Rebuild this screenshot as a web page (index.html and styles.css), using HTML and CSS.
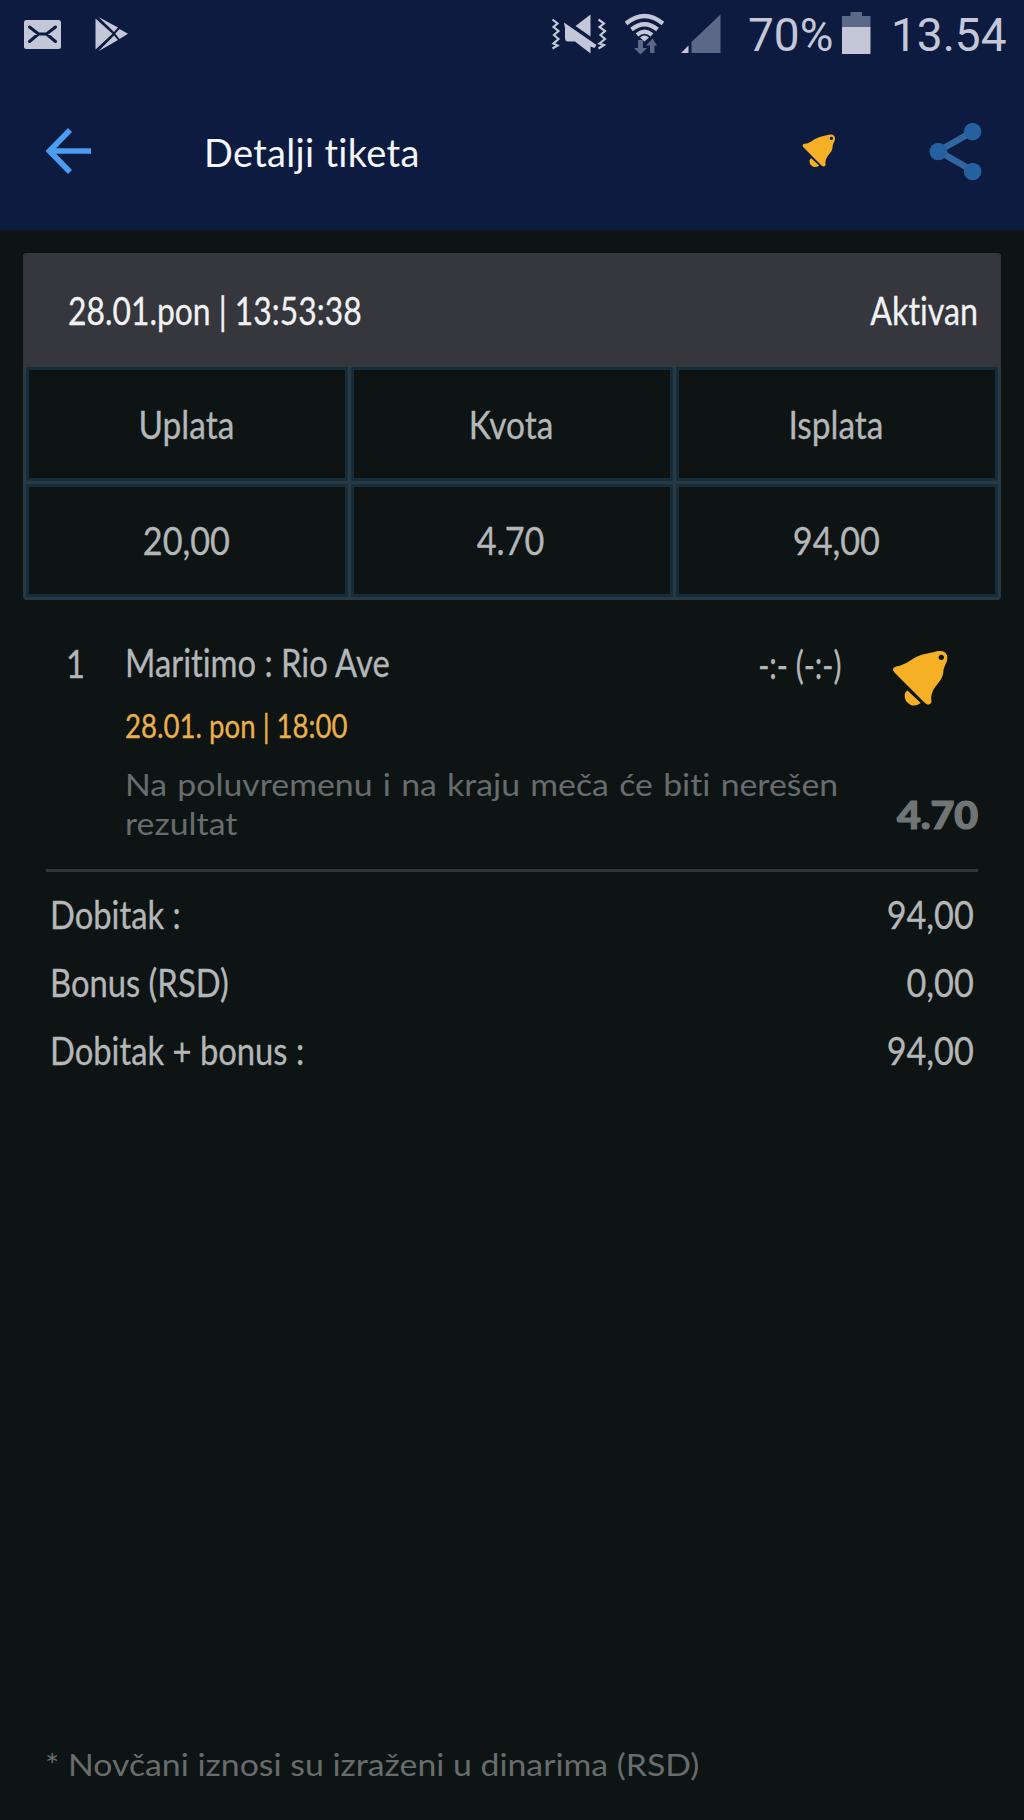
FILE: index.html
```html
<!DOCTYPE html>
<html lang="sr-Latn">
<head>
    <meta charset="UTF-8">
    <title>Detalji tiketa</title>
    <link rel="stylesheet" href="styles.css">
</head>
<body>
    <!-- Bell shared by the app bar and the match row -->
    <svg class="symbols" width="0" height="0">
        <symbol id="bell" viewBox="0 0 170 170">
            <path fill-rule="evenodd" d="M12 49C46 46 60 19 98 12C120 9 128 3 146 3A19 19 0 0 1 165 23C165 40 154 46 153 66C150 98 117 108 117 146Q121 162 107 163Q101 161 96 156L8 68Q-4 54 12 49ZM147 14a8 8 0 1 0 .1 0Z"/>
            <path d="M46 121L86 158Q70 169 56 164Q36 154 38 133Q39 124 46 121Z"/>
        </symbol>
    </svg>

    <div class="top">
        <div class="status-bar">
            <svg class="st-mail" width="38" height="60" viewBox="24 0 38 60">
                <rect x="24" y="20" width="37" height="29" rx="2.5" fill="#c3c7d8"/>
                <path d="M29.500 27L38.500 34H46.500L55.500 27M29.500 41.500L38.500 34M55.500 41.500L46.500 34" fill="none" stroke="#0c1b3f" stroke-width="3" stroke-linecap="round"/>
            </svg>
            <svg class="st-play" width="35" height="60" viewBox="95 0 35 60">
                <path d="M95.500 18.500L112.500 33.800L95.500 49.500ZM98.500 17L118 27.500L114 32ZM98.500 51.200L118 40L114 35.500ZM119.500 29L128 33.800L119.500 39L115.200 33.800Z" fill="#c3c7d8"/>
            </svg>
            <svg class="st-mute" width="58" height="60" viewBox="550 0 58 60">
                <path d="M575.500 26L590.500 14.500V36.500Z" fill="#c3c7d8"/>
                <path d="M564 22.500L596.500 45L594.500 48L590.500 46.500V53.500L575 41.500H568Q565 41.500 565 38V28Z" fill="#c3c7d8"/>
                <path d="M552.500 19.500L557.500 23.500L553.500 27L558.500 31L554 35L558.500 39L553.500 43.500L557.500 45.500L552.500 48.500M598.500 19.500L604 23.500L599.500 27L605 31L600.500 35L605 39L599.500 43.500L604 45L598.500 48.500" fill="none" stroke="#c3c7d8" stroke-width="2.200"/>
            </svg>
            <svg class="st-wifi" width="40" height="60" viewBox="625 0 40 60">
                <path d="M626 23.500Q644.500 8.500 663 23.500M631.500 29.500Q644.500 19 657.500 29.500M637 34.800Q644.500 28.500 652 34.800" fill="none" stroke="#c3c7d8" stroke-width="4.200"/>
                <path d="M640 37.500Q644.500 33.500 649 37.500L644.500 41.500Z" fill="#c3c7d8"/>
                <path d="M638 40H643V48H647L640.500 54.500L634 48H638ZM650 53V45.500H646L652.500 38.500L657 45.500H654.500V53Z" fill="#5c6986"/>
            </svg>
            <svg class="st-signal" width="40" height="60" viewBox="681 0 40 60">
                <path d="M720.500 14.500V53H691.500V42Z" fill="#5c6986"/>
                <path d="M688.500 45.500V53H681Z" fill="#c3c7d8"/>
            </svg>
            <span class="st-text st-percent">70%</span>
            <svg class="st-battery" width="29" height="60" viewBox="842 0 29 60">
                <path d="M842 27V16H850.500V12H862V16H870.500V27Z" fill="#5c6986"/>
                <path d="M842 27H870.500V54H842Z" fill="#c3c7d8"/>
            </svg>
            <span class="st-text st-time">13.54</span>
        </div>

        <div class="app-bar">
            <svg class="back" width="46" height="46" viewBox="0 0 46 46">
                <path d="M45 23H4M24 2L3.500 23L24 44" fill="none" stroke="#4a9df0" stroke-width="5.600"/>
            </svg>
            <h1>Detalji tiketa</h1>
            <svg class="bell-small"><use href="#bell"/></svg>
            <svg class="share" width="54" height="60" viewBox="0 0 54 60">
                <path d="M44 10.500L9.500 30L44 50" fill="none" stroke="#3465a3" stroke-width="6.500"/>
                <g fill="#2560a1">
                    <circle cx="9.300" cy="30.500" r="8.800"/>
                    <circle cx="43.600" cy="10.600" r="8.800"/>
                    <circle cx="43.600" cy="50.500" r="8.800"/>
                </g>
            </svg>
        </div>
    </div>

    <div class="ticket">
        <div class="ticket-head">
            <span class="narrow ticket-time">28.01.pon | 13:53:38</span>
            <span class="narrow right">Aktivan</span>
        </div>
        <div class="ticket-grid">
            <div><span class="narrow center">Uplata</span></div>
            <div><span class="narrow center">Kvota</span></div>
            <div><span class="narrow center">Isplata</span></div>
            <div><span class="narrow center num">20,00</span></div>
            <div><span class="narrow center num">4.70</span></div>
            <div><span class="narrow center num">94,00</span></div>
        </div>
    </div>

    <div class="match">
        <div class="match-no"><span class="narrow">1</span></div>
        <div class="match-info">
            <div class="match-teams">
                <span class="narrow">Maritimo : Rio Ave</span>
                <span class="narrow right score">-:- (-:-)</span>
            </div>
            <div class="match-date"><span class="narrow">28.01. pon | 18:00</span></div>
            <div class="match-tip">Na poluvremenu i na kraju meča će biti nerešen<br>rezultat</div>
        </div>
        <div class="match-side">
            <svg class="bell-big"><use href="#bell"/></svg>
            <span class="odds">4.70</span>
        </div>
    </div>

    <div class="totals">
        <div class="row"><span class="narrow">Dobitak :</span><span class="narrow right num">94,00</span></div>
        <div class="row"><span class="narrow">Bonus (RSD)</span><span class="narrow right num">0,00</span></div>
        <div class="row"><span class="narrow">Dobitak + bonus :</span><span class="narrow right num">94,00</span></div>
    </div>

    <div class="note"><span>* Novčani iznosi su izraženi u dinarima (RSD)</span></div>
</body>
</html>
```
FILE: styles.css
```css
* {
    box-sizing: border-box;
}
body {
    margin: 0;
    height: 1820px;
    display: flex;
    flex-direction: column;
    background: #0e1414;
    color: #b4b7b8;
    font-family: 'Lato', 'Open Sans', sans-serif;
    font-size: 38px;
    font-variant-ligatures: none;
    white-space: nowrap;
    overflow: hidden;
}
svg {
    display: block;
    flex: none;
}
.symbols {
    position: absolute;
}

/* condensed text */
.narrow {
    display: inline-block;
    transform: scaleX(0.862);
    transform-origin: left center;
    -webkit-text-stroke: 0.3px currentColor;
}
.narrow.right {
    transform: scaleX(0.848);
    transform-origin: right center;
}
.narrow.center {
    transform: scaleX(0.88);
    transform-origin: center;
}
.narrow.num {
    transform: scaleX(0.9);
}
.narrow.ticket-time {
    transform: scaleX(0.838);
}

/* top */
.top {
    height: 230px;
    background: #0c1b3f;
}
.status-bar {
    height: 71px;
    display: flex;
    align-items: flex-start;
    padding: 0 17px 0 24px;
}
.st-play {
    margin-left: 33px;
}
.st-mute {
    margin-left: auto;
}
.st-wifi {
    margin-left: 17px;
}
.st-signal {
    margin-left: 16px;
}
.st-text {
    font-family: 'Roboto', sans-serif;
    font-size: 46px;
    line-height: 71px;
    color: #c3c7d8;
}
.st-percent {
    width: 86px;
    margin-left: 27px;
}
.st-battery {
    margin-left: 8px;
}
.st-time {
    width: 116px;
    margin-left: 20px;
}
.app-bar {
    height: 160px;
    display: flex;
    align-items: center;
    padding: 0 41px 0 46px;
}
h1 {
    margin: 2px 0 0 112px;
    font-size: 38px;
    font-weight: 400;
    letter-spacing: 0.3px;
    color: #f4f6fa;
}
.bell-small {
    width: 34px;
    height: 34px;
    margin-left: auto;
    fill: #f5b026;
}
.share {
    margin-left: 93px;
}

/* ticket card */
.ticket {
    height: 347px;
    margin: 23px 23px 0;
    background: #283942;
    border-radius: 4px;
    overflow: hidden;
}
.ticket-head {
    height: 114px;
    display: flex;
    align-items: center;
    justify-content: space-between;
    padding: 0 23px 0 45px;
    background: #35373c;
    color: #f1f2f3;
}
.ticket-grid {
    height: 233px;
    display: grid;
    grid-template-columns: repeat(3, 1fr);
    grid-template-rows: repeat(2, 1fr);
    gap: 3px;
    padding: 0 3px 3px;
}
.ticket-grid div {
    display: flex;
    align-items: center;
    justify-content: center;
    padding-right: 2px;
    background: #0e1414;
    border: 3px solid #162e3b;
}

/* match */
.match {
    display: flex;
    height: 272px;
    margin: 0 46px;
    padding-top: 40px;
    border-bottom: 3px solid #313537;
}
.match-no {
    width: 79px;
    padding-left: 20px;
    line-height: 46px;
}
.match-info {
    width: 716px;
}
.match-teams {
    display: flex;
    justify-content: space-between;
    line-height: 44px;
}
.match-teams .score {
    height: 44px;
    line-height: 48px;
    transform: scaleX(0.79);
}
.match-date {
    margin-top: 22px;
    font-size: 32px;
    line-height: 40px;
    color: #eab04a;
}
.match-tip {
    width: 650px;
    margin-top: 19px;
    font-size: 31px;
    line-height: 38.500px;
    word-spacing: 1.5px;
    color: #686c6d;
    transform: scaleX(1.09);
    transform-origin: left center;
}
.match-side {
    flex: 1;
    display: flex;
    flex-direction: column;
    align-items: flex-end;
}
.bell-big {
    width: 57px;
    height: 57px;
    margin: 10px 29px 0 0;
    fill: #f5b026;
}
.odds {
    margin-top: 85px;
    font-size: 37px;
    font-weight: 900;
    line-height: 46px;
    color: #717576;
    -webkit-text-stroke: 1.2px #717576;
    transform: scaleX(1.11);
    transform-origin: right center;
}

/* totals */
.totals {
    padding: 8px 50px 0;
}
.row {
    display: flex;
    justify-content: space-between;
    line-height: 68.200px;
}

.note {
    margin-top: auto;
    padding: 0 45px 36px;
    font-size: 31px;
    line-height: 40px;
    color: #686c6d;
}
.note span {
    display: inline-block;
    transform: scaleX(1.09);
    transform-origin: left center;
}
```
